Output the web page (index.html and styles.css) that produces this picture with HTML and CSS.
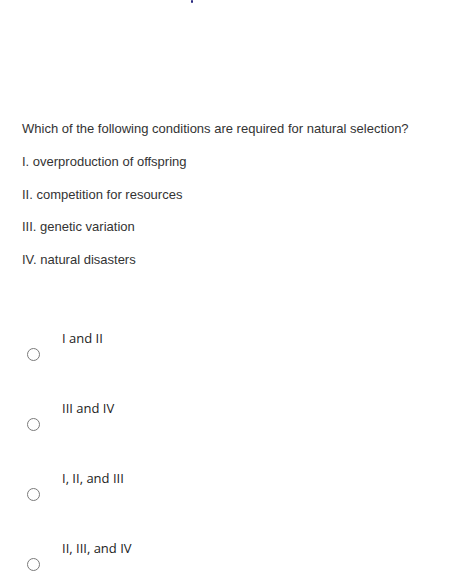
FILE: index.html
```html
<!DOCTYPE html>
<html>
<head>
<meta charset="utf-8">
<link rel="stylesheet" href="styles.css">
</head>
<body>
<div class="page">
  <div class="topbar"><span class="dot"></span></div>
  <div class="question">
    <p class="line">Which of the following conditions are required for natural selection?</p>
    <p class="line">I. overproduction of offspring</p>
    <p class="line">II. competition for resources</p>
    <p class="line">III. genetic variation</p>
    <p class="line">IV. natural disasters</p>
  </div>
  <div class="options">
    <div class="option"><span class="radio"></span><span class="label">I and II</span></div>
    <div class="option"><span class="radio"></span><span class="label">III and IV</span></div>
    <div class="option"><span class="radio"></span><span class="label">I, II, and III</span></div>
    <div class="option"><span class="radio"></span><span class="label">II, III, and IV</span></div>
  </div>
</div>
</body>
</html>
```

FILE: styles.css
```css
html, body {
  margin: 0;
  padding: 0;
  background: #ffffff;
}
.page {
  width: 456px;
  height: 583px;
  overflow: hidden;
}
.topbar {
  height: 120px;
  position: relative;
}
.dot {
  position: absolute;
  left: 191px;
  top: 0;
  width: 2px;
  height: 3px;
  background: #2a2a80;
  border-radius: 1px;
}
.question {
  padding-left: 22px;
  display: flex;
  flex-direction: column;
  gap: 14.75px;
}
.line {
  margin: 0;
  font-family: "Liberation Sans", Arial, sans-serif;
  font-size: 13px;
  line-height: 18px;
  color: #333333;
}
.options {
  margin-top: 60px;
  display: flex;
  flex-direction: column;
  gap: 52px;
}
.option {
  display: flex;
  align-items: flex-start;
  height: 18px;
}
.radio {
  box-sizing: border-box;
  width: 13px;
  height: 13px;
  border: 1px solid #7a7a7a;
  border-radius: 50%;
  margin-left: 27px;
  margin-top: 19px;
  flex: none;
}
.label {
  margin-left: 22px;
  font-family: "Open Sans", sans-serif;
  font-size: 13px;
  line-height: 18px;
  color: #222222;
}
```
